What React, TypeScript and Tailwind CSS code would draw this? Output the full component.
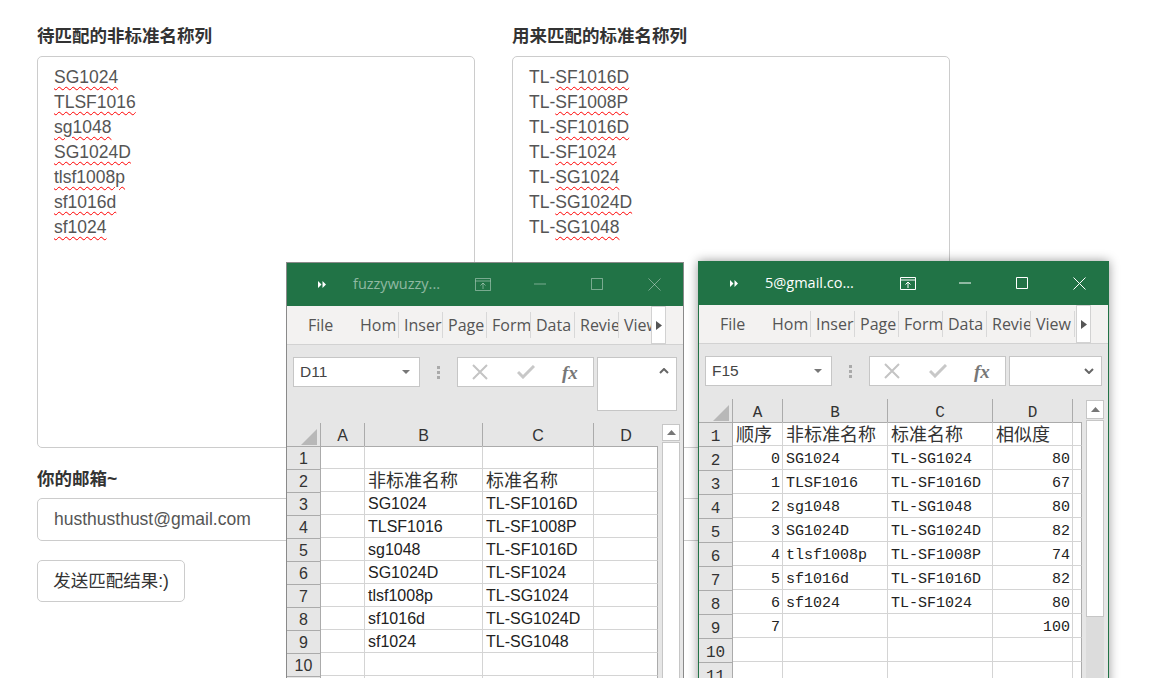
import React from "react";

const SANS = "font-['Liberation_Sans','Noto_Sans_CJK_SC',sans-serif]";
const MONO = "font-['Liberation_Mono','Noto_Sans_CJK_SC',monospace]";

const leftNames = ["SG1024", "TLSF1016", "sg1048", "SG1024D", "tlsf1008p", "sf1016d", "sf1024"];
const rightNames = [
    ["TL-", "SF1016D"],
    ["TL-", "SF1008P"],
    ["TL-", "SF1016D"],
    ["TL-", "SF1024"],
    ["TL-", "SG1024"],
    ["TL-", "SG1024D"],
    ["TL-", "SG1048"],
];

const sheetOne: (string | number)[][] = [
    ["", "", "", ""],
    ["", "非标准名称", "标准名称", ""],
    ["", "SG1024", "TL-SF1016D", ""],
    ["", "TLSF1016", "TL-SF1008P", ""],
    ["", "sg1048", "TL-SF1016D", ""],
    ["", "SG1024D", "TL-SF1024", ""],
    ["", "tlsf1008p", "TL-SG1024", ""],
    ["", "sf1016d", "TL-SG1024D", ""],
    ["", "sf1024", "TL-SG1048", ""],
    ["", "", "", ""],
    ["", "", "", ""],
];

const sheetTwo: (string | number)[][] = [
    ["顺序", "非标准名称", "标准名称", "相似度", ""],
    [0, "SG1024", "TL-SG1024", 80, ""],
    [1, "TLSF1016", "TL-SF1016D", 67, ""],
    [2, "sg1048", "TL-SG1048", 80, ""],
    [3, "SG1024D", "TL-SG1024D", 82, ""],
    [4, "tlsf1008p", "TL-SF1008P", 74, ""],
    [5, "sf1016d", "TL-SF1016D", 82, ""],
    [6, "sf1024", "TL-SF1024", 80, ""],
    [7, "", "", 100, ""],
    ["", "", "", "", ""],
    ["", "", "", "", ""],
];

const Squiggle = ({children}: { children: React.ReactNode }) => (
    <span className="underline decoration-wavy decoration-[#ff0000] decoration-[length:1.15px] underline-offset-[3px]">{children}</span>
);

const Label = ({children}: { children: React.ReactNode }) => (
    <label className="block h-[25px] text-[17.5px] leading-[25px] font-bold text-[#333] mb-[7px]">{children}</label>
);

const NameBox = ({children}: { children: React.ReactNode }) => (
    <div className="h-[392px] w-[438px] border border-[#ccc] rounded-[5px] pt-2 pl-4 text-[17.5px] leading-[25px] text-[#555]">
        {children}
    </div>
);

type WindowProps = {
    title: string;
    cell: string;
    faded: boolean;
    tabs: string[];
    columns: string[];
    rows: (string | number)[][];
    frame: string;
    titleWidth: string;
    gridCols: string;
    rowHeight: string;
    formulaHeight: string;
    headerHeight: string;
    sheetWidth: string;
    valueBox: string;
    valueIcon: React.ReactNode;
    font: string;
    latinSize: string;
    textPad: string;
    thumb: string;
};

function TitleIcons({faded}: { faded: boolean }) {
    const tone = faded ? "stroke-white/40" : "stroke-white";
    return (
        <div className="flex items-center">
            <svg className={`w-4 h-[13px] fill-none ${tone}`} viewBox="0 0 16 13">
                <path d="M.5.5h15v12H.5zM.5 3h15M8 11V5M5.5 7.5 8 5l2.5 2.5"/>
            </svg>
            <svg className={`w-3 h-3 ml-[43px] fill-none ${tone}`} viewBox="0 0 12 12">
                <path d="M0 6h12"/>
            </svg>
            <svg className={`w-3 h-3 ml-[45px] fill-none ${tone}`} viewBox="0 0 12 12">
                <path d="M.5.5h11v11H.5z"/>
            </svg>
            <svg className={`w-[13px] h-[13px] ml-[45px] fill-none ${tone}`} viewBox="0 0 13 13">
                <path d="m.5.5 12 12M12.5.5l-12 12"/>
            </svg>
        </div>
    );
}

function ExcelWindow(p: WindowProps) {
    return (
        <div className={`absolute flex flex-col bg-[#e6e6e6] ${p.frame}`}>
            {/* title bar */}
            <div className="h-[43px] shrink-0 bg-[#217346] flex items-center pb-[1px]">
                <svg className="w-[8px] h-[7px] ml-[31px] mr-[27px] fill-white" viewBox="0 0 8 7">
                    <path d="M0 0l3.5 3.5L0 7zM4.5 0 8 3.5 4.5 7z"/>
                </svg>
                <div className={`${p.titleWidth} text-[14.5px] font-['Open_Sans',sans-serif] ${p.faded ? "text-white/50" : "text-white"}`}>
                    {p.title}
                </div>
                <TitleIcons faded={p.faded}/>
            </div>

            {/* ribbon tabs */}
            <div className="h-[39px] shrink-0 bg-[#f3f2f1] border-b border-[#d2d2d2] flex items-center relative pl-[14px] font-['Open_Sans',sans-serif] text-[16px] text-[#555]">
                <div className="w-[54px] pl-[7px]">File</div>
                {p.tabs.map((t) => (
                    <div key={t} className="w-[44px] h-[26px] leading-[26px] pl-[5px] pr-[3px] border-r border-[#d8d8d8] overflow-hidden whitespace-nowrap">
                        {t}
                    </div>
                ))}
                <div className="absolute right-[17px] top-0 w-[15px] h-[38px] bg-white border border-[#d2d2d2] flex items-center justify-center">
                    <svg className="w-[6px] h-[9px] fill-[#555]" viewBox="0 0 6 9"><path d="M0 0l6 4.5L0 9z"/></svg>
                </div>
            </div>

            {/* name box + formula bar */}
            <div className={`${p.formulaHeight} shrink-0 pt-3 pl-[6px] flex items-start`}>
                <div className={`w-[127px] h-[30px] bg-white border border-[#c6c6c6] flex items-center justify-between pl-[6px] pr-[9px] text-[15.5px] text-[#444] ${SANS}`}>
                    {p.cell}
                    <svg className="w-[8px] h-[4px] fill-[#777]" viewBox="0 0 8 4"><path d="M0 0h8L4 4z"/></svg>
                </div>
                <div className="w-[37px] h-[30px] flex flex-col items-center justify-center gap-[2px]">
                    <span className="w-[3px] h-[3px] bg-[#aaa]"/>
                    <span className="w-[3px] h-[3px] bg-[#aaa]"/>
                    <span className="w-[3px] h-[3px] bg-[#aaa]"/>
                </div>
                <div className="w-[137px] h-[30px] bg-white border border-[#c6c6c6] flex items-center pl-[14px]">
                    <svg className="w-[16px] h-[16px] fill-none stroke-[#c4c4c4] stroke-2" viewBox="0 0 16 16">
                        <path d="m1 1 14 14M15 1 1 15"/>
                    </svg>
                    <svg className="w-[18px] h-[14px] ml-[29px] fill-none stroke-[#c8c8c8] stroke-[3]" viewBox="0 0 18 14">
                        <path d="m1 7 5 5L17 1"/>
                    </svg>
                    <span className="ml-[27px] text-[19px] leading-none font-bold italic text-[#777] font-['Liberation_Serif',serif]">fx</span>
                </div>
                <div className={`ml-[3px] bg-white border border-[#c6c6c6] flex justify-end pr-[7px] ${p.valueBox}`}>
                    {p.valueIcon}
                </div>
            </div>

            {/* sheet */}
            <div className="flex flex-1 min-h-0">
                <div className={`${p.sheetWidth} shrink-0 ${p.font}`}>
                    <div className={`grid ${p.gridCols} ${p.headerHeight}`}>
                        <div className="flex items-end justify-end pr-[3px] pb-[1px] border-r border-[#ababab]">
                            <svg className="w-[16px] h-[16px] fill-[#b8b8b8]" viewBox="0 0 16 16"><path d="M16 0v16H0z"/></svg>
                        </div>
                        {p.columns.map((c, i) => (
                            <div key={i} className={`flex items-center justify-center border-r border-[#ababab] text-[#333] text-[16px] leading-none last:border-r-0 ${p.textPad}`}>
                                {c}
                            </div>
                        ))}
                    </div>
                    {p.rows.map((row, r) => (
                        <div key={r} className={`grid ${p.gridCols} ${p.rowHeight}`}>
                            <div className={`bg-[#e6e6e6] border-t border-r border-[#ababab] flex items-center justify-center text-[16px] leading-none text-[#333] ${p.textPad}`}>
                                {r + 1}
                            </div>
                            {row.map((v, c) => {
                                const isNum = typeof v === "number";
                                const cjk = typeof v === "string" && /[^\x00-\x7f]/.test(v);
                                return (
                                    <div key={c} className={`bg-white border-r border-b border-[#d4d4d4] flex items-center whitespace-nowrap overflow-hidden leading-none text-[#222] last:border-r-[#ababab] ${p.textPad} ${r === 0 ? "border-t border-t-[#ababab]" : ""} ${isNum ? "justify-end pr-[2px]" : "pl-[3px]"} ${cjk ? "text-[18px] text-[#333]" : p.latinSize}`}>
                                        {v}
                                    </div>
                                );
                            })}
                        </div>
                    ))}
                </div>
                <div className="ml-[4px] w-[18px] shrink-0 flex flex-col">
                    <div className="mt-[1px] h-[19px] bg-white border border-[#c6c6c6] flex items-center justify-center">
                        <svg className="w-[9px] h-[5px] fill-[#777]" viewBox="0 0 9 5"><path d="M4.5 0 9 5H0z"/></svg>
                    </div>
                    <div className={`mt-[1px] bg-white border border-[#c6c6c6] ${p.thumb}`}/>
                    <div className="flex-1 bg-[#dcdcdc]"/>
                </div>
            </div>
        </div>
    );
}

export default function App() {
    return (
        <div className={`relative h-[678px] overflow-hidden bg-white ${SANS}`}>
            <div className="w-[950px] pl-[37px] pt-6">
                <div className="grid grid-cols-[438px_438px] gap-x-[37px]">
                    <div>
                        <Label>待匹配的非标准名称列</Label>
                        <NameBox>
                            {leftNames.map((n) => (
                                <div key={n}><Squiggle>{n}</Squiggle></div>
                            ))}
                        </NameBox>
                    </div>
                    <div>
                        <Label>用来匹配的标准名称列</Label>
                        <NameBox>
                            {rightNames.map(([a, b], i) => (
                                <div key={i}>{a}<Squiggle>{b}</Squiggle></div>
                            ))}
                        </NameBox>
                    </div>
                </div>

                <div className="mt-[19px]">
                    <label className="block h-[25px] text-[17.5px] leading-[25px] font-bold text-[#333] mb-[6px]">你的邮箱~</label>
                    <div className="h-[43px] border border-[#ccc] rounded-[5px] pl-4 flex items-center text-[17.5px] text-[#555]">
                        husthusthust@gmail.com
                    </div>
                    <button className="mt-[19px] h-[42px] w-[148px] border border-[#ccc] rounded-[5px] text-[17.5px] text-[#333] bg-white">
                        发送匹配结果:)
                    </button>
                </div>
            </div>

            <ExcelWindow
                title="fuzzywuzzy..."
                cell="D11"
                faded
                tabs={["Hom", "Inser", "Page", "Form", "Data", "Revie", "View"]}
                columns={["A", "B", "C", "D"]}
                rows={sheetOne}
                frame="left-[286px] top-[262px] w-[398px] h-[440px] border border-[#8a8a8a]"
                titleWidth="w-[122px]"
                gridCols="grid-cols-[34px_44px_118px_111px_64px]"
                rowHeight="h-[23px]"
                formulaHeight="h-[78px]"
                headerHeight="h-[23px]"
                sheetWidth="w-[371px]"
                valueBox="w-[80px] h-[54px] pt-[10px]"
                valueIcon={<svg className="w-[10px] h-[6px] fill-none stroke-[#666] stroke-2" viewBox="0 0 10 6"><path d="m1 5 4-4 4 4"/></svg>}
                font={SANS}
                latinSize="text-[16px]"
                textPad="pt-[2px]"
                thumb="h-[300px]"
            />

            <ExcelWindow
                title="5@gmail.co..."
                cell="F15"
                faded={false}
                tabs={["Hom", "Inser", "Page", "Form", "Data", "Revie", "View"]}
                columns={["A", "B", "C", "D", ""]}
                rows={sheetTwo}
                frame="left-[698px] top-[261px] w-[411px] h-[440px] border border-[#217346] shadow-[0_0_10px_rgba(0,0,0,0.4)]"
                titleWidth="w-[135px]"
                gridCols="grid-cols-[34px_50px_105px_105px_80px_9px]"
                rowHeight="h-[24px]"
                formulaHeight="h-[55px]"
                headerHeight="h-[23px]"
                sheetWidth="w-[383px]"
                valueBox="w-[93px] h-[30px] items-center"
                valueIcon={<svg className="w-[10px] h-[6px] fill-none stroke-[#666] stroke-2" viewBox="0 0 10 6"><path d="m1 1 4 4 4-4"/></svg>}
                font={MONO}
                latinSize="text-[15px]"
                textPad="pt-[4px]"
                thumb="h-[197px]"
            />
        </div>
    );
}
